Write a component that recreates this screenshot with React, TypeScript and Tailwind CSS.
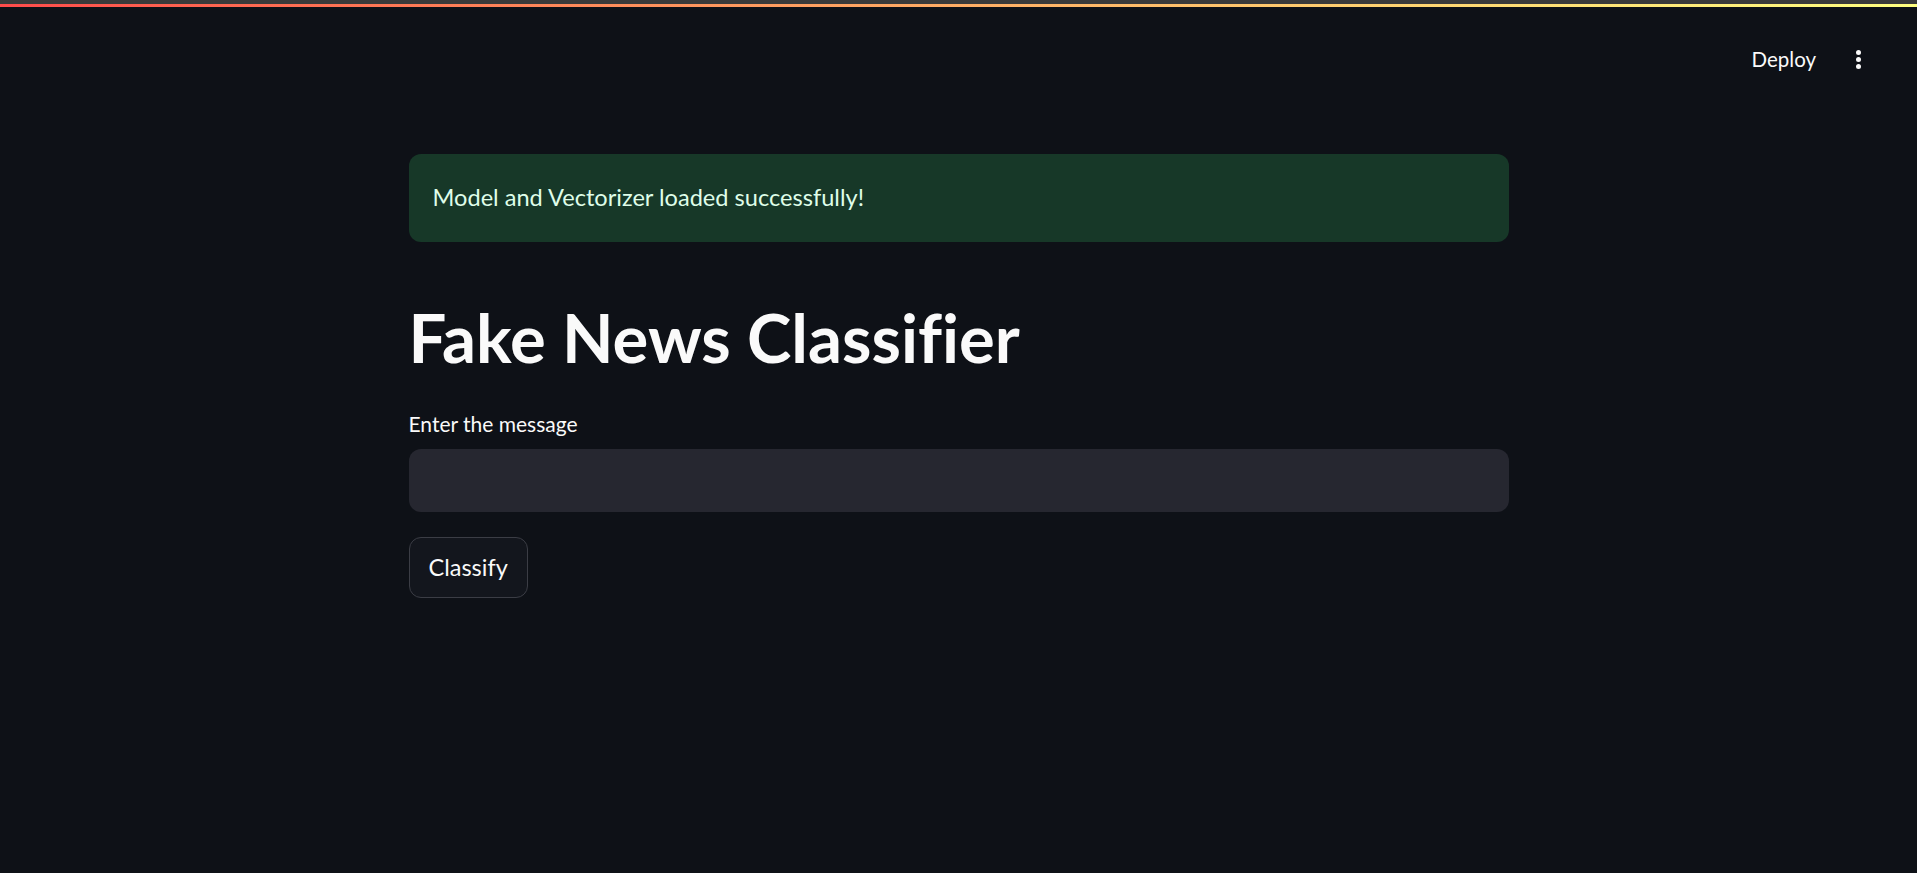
import React from 'react';

const font = { fontFamily: 'Lato, "Noto Sans", sans-serif' };

const App: React.FC = () => {
    return (
        <div className="min-h-[873px] w-full bg-[#0e1117] text-[#fafafa] [font-variant-ligatures:none]" style={font}>
            {/* Top decoration */}
            <div className="h-[4px] bg-[#3a3a3a]" />
            <div className="h-[3px] bg-gradient-to-r from-[#ff4b4b] to-[#ffff80]" />

            {/* Header */}
            <header className="flex h-[104px] items-center justify-end gap-[40px] pr-[56px]">
                <span className="text-[20.5px] leading-none">Deploy</span>
                <div className="flex flex-col gap-[2px]">
                    <span className="h-[5px] w-[5px] rounded-full bg-[#fafafa]" />
                    <span className="h-[5px] w-[5px] rounded-full bg-[#fafafa]" />
                    <span className="h-[5px] w-[5px] rounded-full bg-[#fafafa]" />
                </div>
            </header>

            {/* Main block */}
            <main className="mx-auto flex w-[1100px] flex-col pt-[43px]">
                <div className="flex h-[88px] items-center rounded-[12px] bg-[#173828] px-6 text-[23.6px] text-[#dffde9]">
                    Model and Vectorizer loaded successfully!
                </div>

                <h1 className="mt-[55px] text-[67px] leading-[1.2] font-bold">
                    Fake News Classifier
                </h1>

                <label className="mt-[31px] text-[21px] leading-[1.5]">Enter the message</label>
                <input
                    type="text"
                    className="mt-[9px] h-[63px] w-full rounded-[12px] bg-[#262730] px-5 text-[24px] outline-none"
                />

                <div className="mt-[25px]">
                    <button className="h-[61px] rounded-[12px] border border-[#3b3d45] bg-[#13161d] px-[19px] text-[23.5px]">
                        Classify
                    </button>
                </div>
            </main>
        </div>
    );
};

export default App;
